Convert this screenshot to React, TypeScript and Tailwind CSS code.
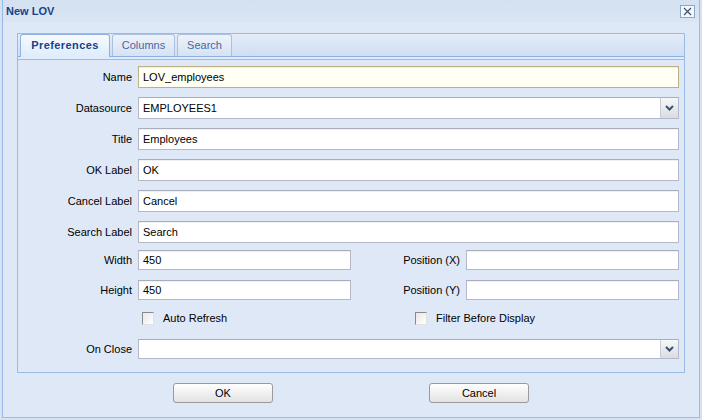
import { ReactNode } from "react";

const Label = ({ children, w }: { children: ReactNode; w: string }) => (
  <div className={`${w} shrink-0 pr-[6px] text-right leading-none`}>{children}</div>
);

const TextBox = ({
  value = "",
  focused = false,
  h = "h-[22px]",
  w = "flex-1",
}: {
  value?: string;
  focused?: boolean;
  h?: string;
  w?: string;
}) => (
  <div
    className={`${w} ${h} flex items-center border pl-[4px] ${
      focused
        ? "border-[#bdb088] bg-[#fffff4] shadow-[inset_0_1px_0_#f3efd9]"
        : "border-[#b5b8c8] border-t-[#a9adbc] bg-white shadow-[inset_0_1px_0_#eef0f4]"
    }`}
  >
    {value}
  </div>
);

const Combo = ({ value = "", h = "h-[22px]" }: { value?: string; h?: string }) => (
  <div className={`flex-1 ${h} flex items-stretch border border-[#b5b8c8] border-t-[#a9adbc] bg-white`}>
    <div className="flex flex-1 items-center pl-[4px]">{value}</div>
    <div className="flex w-[18px] items-center justify-center border-l border-[#c8ccd4] bg-gradient-to-b from-[#f6f7f9] to-[#d9dde3]">
      <svg width="9" height="6" viewBox="0 0 9 6">
        <path d="M1 1 L4.5 4.5 L8 1" fill="none" stroke="#3e5070" strokeWidth="2" />
      </svg>
    </div>
  </div>
);

const Check = ({ label }: { label: string }) => (
  <div className="flex items-center">
    <div className="h-[13px] w-[12px] border border-[#8a8a8a] border-b-[#e2e2e2] border-r-[#e2e2e2] bg-gradient-to-br from-[#e8e8e8] to-white" />
    <span className="ml-[9px] leading-none">{label}</span>
  </div>
);

const Button = ({ children }: { children: ReactNode }) => (
  <div className="flex h-[20px] w-[100px] items-center justify-center rounded-[3px] border border-[#9a9a9a] bg-gradient-to-b from-white to-[#e2e2e2] leading-none">
    {children}
  </div>
);

export default function App() {
  return (
    <div className="flex h-[420px] w-[702px] flex-col bg-[#d6e2f2] px-[2px] pb-[2px] font-['Liberation_Sans',Arial,sans-serif] text-[11px] text-black">
      <div className="flex flex-1 flex-col border border-t-0 border-[#99bbe8] bg-[#dfe8f6]">
        {/* title bar */}
        <div className="flex h-[22px] items-center justify-between bg-gradient-to-b from-[#d3e1f1] to-[#dae5f4] pl-[3px] pr-[4px]">
          <span className="font-bold text-[#15428b]">New LOV</span>
          <div className="flex h-[13px] w-[15px] items-center justify-center border border-[#8aa6cc] bg-[#f4f7fb]">
            <svg width="9" height="9" viewBox="0 0 9 9">
              <path d="M1 1 L8 8 M8 1 L1 8" stroke="#3c4f6e" strokeWidth="1.2" />
            </svg>
          </div>
        </div>

        <div className="flex flex-1 flex-col px-[14px] pt-[11px]">
          {/* tab panel */}
          <div className="flex h-[340px] flex-col border border-[#99bbe8]">
            <div className="flex h-[23px] items-end gap-[2px] border-b border-[#8db2e3] bg-gradient-to-b from-[#e4ecf8] to-[#cfdef3] pl-[2px]">
              <div className="-mb-px flex h-[23px] w-[90px] items-center justify-center rounded-t-[3px] border border-b-0 border-[#8db2e3] bg-gradient-to-b from-[#f7fafd] to-[#deecfd] pb-[1px] font-bold tracking-[0.4px] text-[#15428b]">
                Preferences
              </div>
              <div className="flex h-[22px] w-[63px] items-center justify-center rounded-t-[3px] border border-b-0 border-[#a9c2e4] bg-gradient-to-b from-[#eef3fa] to-[#d6e2f2] text-[#416aa3]">
                Columns
              </div>
              <div className="flex h-[22px] w-[55px] items-center justify-center rounded-t-[3px] border border-b-0 border-[#a9c2e4] bg-gradient-to-b from-[#eef3fa] to-[#d6e2f2] text-[#416aa3]">
                Search
              </div>
            </div>
            <div className="h-[2px] border-b border-[#99bbe8] bg-[#deecfd] box-content" />

            {/* form */}
            <div className="flex flex-col pr-[5px] pt-[6px]">
              <div className="flex items-center">
                <Label w="w-[120px]">Name</Label>
                <TextBox value="LOV_employees" focused />
              </div>
              <div className="mt-[9px] flex items-center">
                <Label w="w-[120px]">Datasource</Label>
                <Combo value="EMPLOYEES1" />
              </div>
              <div className="mt-[9px] flex items-center">
                <Label w="w-[120px]">Title</Label>
                <TextBox value="Employees" />
              </div>
              <div className="mt-[9px] flex items-center">
                <Label w="w-[120px]">OK Label</Label>
                <TextBox value="OK" />
              </div>
              <div className="mt-[9px] flex items-center">
                <Label w="w-[120px]">Cancel Label</Label>
                <TextBox value="Cancel" />
              </div>
              <div className="mt-[9px] flex items-center">
                <Label w="w-[120px]">Search Label</Label>
                <TextBox value="Search" />
              </div>

              <div className="mt-[7px] flex items-center">
                <Label w="w-[120px]">Width</Label>
                <TextBox value="450" h="h-[20px]" w="w-[213px]" />
                <Label w="w-[115px]">Position (X)</Label>
                <TextBox h="h-[20px]" w="w-[213px]" />
              </div>
              <div className="mt-[10px] flex items-center">
                <Label w="w-[120px]">Height</Label>
                <TextBox value="450" h="h-[20px]" w="w-[213px]" />
                <Label w="w-[115px]">Position (Y)</Label>
                <TextBox h="h-[20px]" w="w-[213px]" />
              </div>

              <div className="mt-[8px] flex h-[20px] items-center pl-[124px]">
                <div className="w-[273px]">
                  <Check label="Auto Refresh" />
                </div>
                <Check label="Filter Before Display" />
              </div>

              <div className="mt-[11px] flex items-center">
                <Label w="w-[120px]">On Close</Label>
                <Combo h="h-[20px]" />
              </div>
            </div>
          </div>

          {/* footer */}
          <div className="mt-[10px] flex justify-center gap-[156px]">
            <Button>OK</Button>
            <Button>Cancel</Button>
          </div>
        </div>
      </div>
    </div>
  );
}
